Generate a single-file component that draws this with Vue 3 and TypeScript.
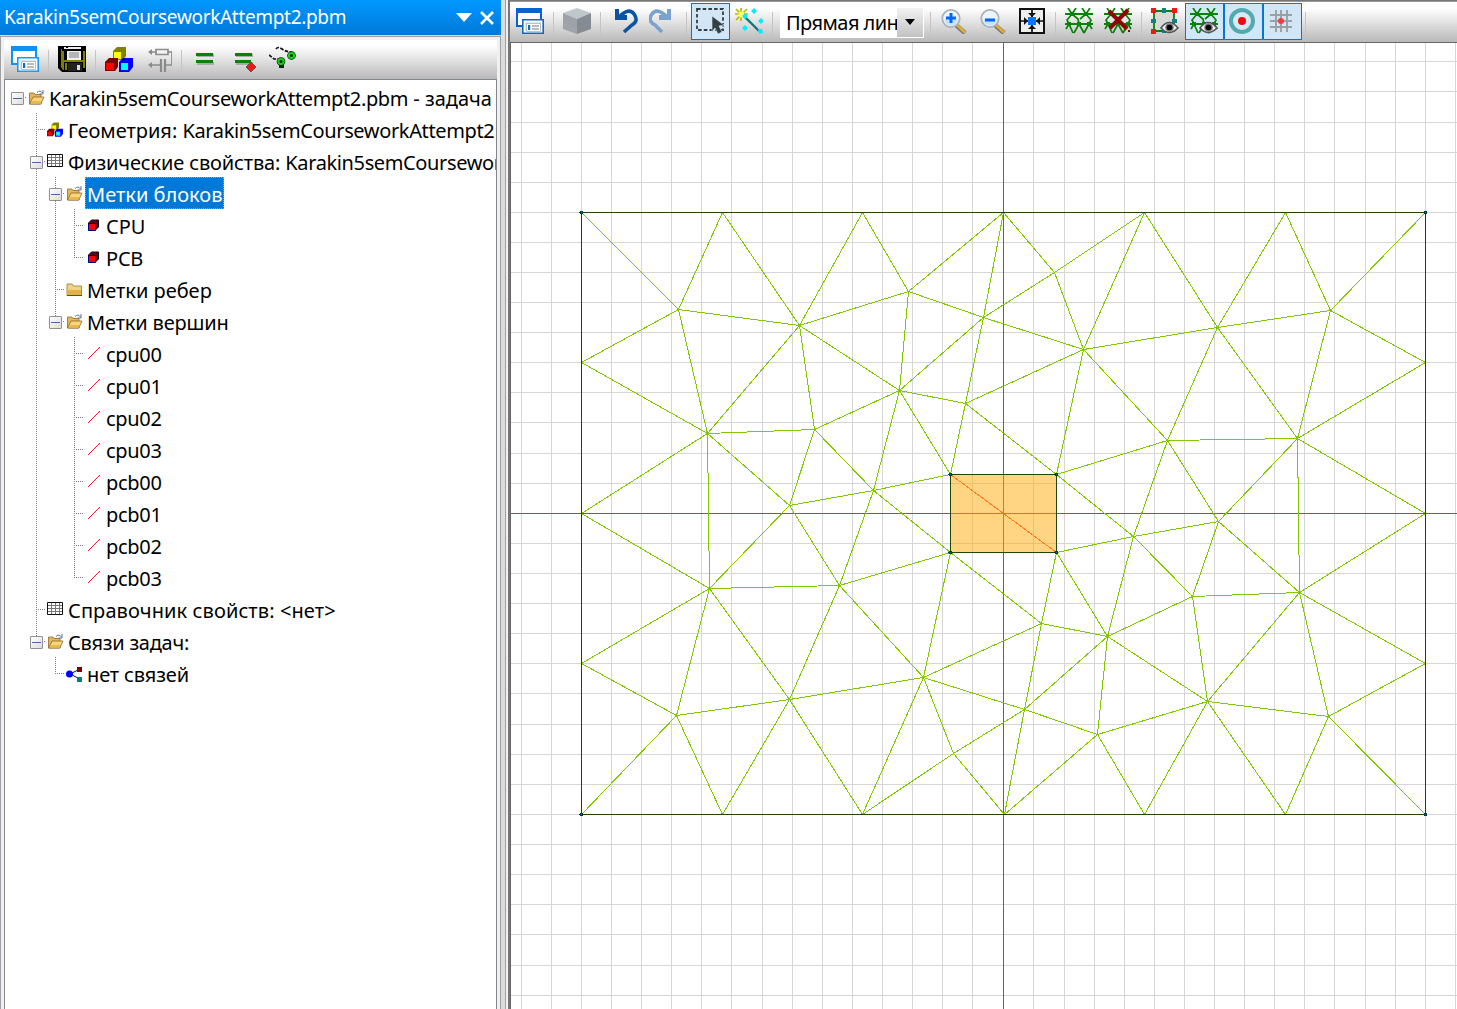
<script setup lang="ts">
type Pt = [number, number]
interface Row { cells: string; icon: string; text: string; selected?: boolean; spacing: number }

// guide cells: E/X/Y expanders (root / middle / last), T tee, L elbow, | line, . blank
const rows: Row[] = [
  { cells: 'E', icon: 'open', text: 'Karakin5semCourseworkAttempt2.pbm - задача', spacing: 0 },
  { cells: '.T', icon: 'cubes', text: 'Геометрия: Karakin5semCourseworkAttempt2', spacing: 0 },
  { cells: '.X', icon: 'table', text: 'Физические свойства: Karakin5semCoursework', spacing: -0.15 },
  { cells: '.|X', icon: 'open', text: 'Метки блоков', selected: true, spacing: 0 },
  { cells: '.||T', icon: 'block', text: 'CPU', spacing: 0 },
  { cells: '.||L', icon: 'block', text: 'PCB', spacing: -0.2 },
  { cells: '.|T', icon: 'closed', text: 'Метки ребер', spacing: 0 },
  { cells: '.|Y', icon: 'open', text: 'Метки вершин', spacing: -0.15 },
  ...['cpu00', 'cpu01', 'cpu02', 'cpu03', 'pcb00', 'pcb01', 'pcb02', 'pcb03'].map((text, i) => ({
    cells: i === 7 ? '.|.L' : '.|.T', icon: 'line', text, spacing: -0.3,
  })),
  { cells: '.T', icon: 'table', text: 'Справочник свойств: <нет>', spacing: 0.1 },
  { cells: '.Y', icon: 'open', text: 'Связи задач:', spacing: -0.27 },
  { cells: '..L', icon: 'link', text: 'нет связей', spacing: -0.15 },
]
const kinds: Record<string, string> = { E: 'root', X: 'mid', Y: 'last', T: 'tee', L: 'elbow', '|': 'pipe', '.': 'blank' }
const parts = (text: string) => text.split(/(Karakin\S+)/).filter(Boolean)

const gridX = [521, 551, 581, 611, 641, 671, 701, 731, 762, 792, 822, 852, 882, 912, 942, 972, 1003, 1033, 1064, 1094, 1124, 1154, 1184, 1214, 1244, 1274, 1304, 1334, 1365, 1395, 1425, 1455]
const gridY = [61, 91, 122, 152, 182, 212, 242, 272, 302, 332, 362, 392, 422, 453, 483, 513, 543, 573, 603, 633, 663, 693, 724, 754, 784, 814, 844, 874, 904, 934, 965, 995]

const nodes: Record<string, Pt> = {
  TL: [581, 212], TR: [1425, 212], BL: [581, 814], BR: [1425, 814],
  T1: [722, 212], T2: [862, 212], T3: [1003, 212], T4: [1144, 212], T5: [1285, 212],
  B1: [722, 814], B2: [862, 814], B3: [1004, 814], B4: [1144, 814], B5: [1285, 814],
  L1: [581, 362], L2: [581, 513], L3: [581, 663], R1: [1425, 362], R2: [1425, 513], R3: [1425, 663],
  K1: [950, 474], K2: [1056, 474], K3: [950, 552], K4: [1056, 552],
  A: [678, 309], B: [799, 325], C: [908, 291], D: [983, 317], E: [899, 390], F: [965, 403],
  G: [707, 433], H: [814, 429], I: [873, 490], J: [789, 505], L: [1054, 272], M: [1083, 349],
  N: [1217, 327], O: [1330, 310], P: [1167, 440], Q: [1297, 438], G2: [709, 588], R: [839, 585],
  S: [789, 699], T: [676, 715], U: [923, 677], V: [953, 753], W: [1133, 536], X: [1218, 521],
  Y: [1192, 596], Z: [1299, 592], a: [1107, 636], b: [1041, 623], c: [1024, 709], d: [1097, 734],
  e: [1207, 701], f: [1328, 716],
}
const edges = (
  'TL-A A-T1 T1-B B-T2 T2-C C-T3 T3-D T3-L L-T4 T4-M T4-N N-T5 T5-O O-TR L-D L-M A-B B-C C-D D-M M-N N-O ' +
  'A-L1 L1-G A-G B-G B-H B-E G-H H-E C-E E-D D-F E-F F-M F-K1 E-K1 M-K2 F-K2 M-P N-P N-Q O-Q O-R1 R1-Q P-Q P-K2 ' +
  'G-L2 G-G2 G-J H-J H-I J-I I-K1 E-I I-K3 I-R L2-G2 J-G2 J-R G2-R R-K3 G2-L3 G2-T G2-S L3-T T-BL T-B1 T-S S-B1 ' +
  'S-R S-U S-B2 R-U U-K3 K3-b U-b U-c U-V U-B2 V-B2 V-c V-B3 c-B3 c-b c-a c-d b-K4 b-a a-K4 a-d a-e a-Y a-W ' +
  'Y-W Y-X W-X W-K4 K2-W P-W P-X X-Q X-Z Y-Z Q-Z Q-R2 R2-Z Z-R3 Z-e Z-f Y-e e-f f-R3 f-BR e-d d-B3 d-B4 e-B4 e-B5 f-B5'
).split(' ').map(s => s.split('-'))
const h = (v: number) => v + 0.5
const meshPath = edges.map(([p, q]) => `M${h(nodes[p][0])} ${h(nodes[p][1])}L${h(nodes[q][0])} ${h(nodes[q][1])}`).join('')
const gridPath = gridX.map(x => `M${h(x)} 43V1009`).join('') + gridY.map(y => `M511 ${h(y)}H1457`).join('')
const corners = ['TL', 'TR', 'BL', 'BR', 'K1', 'K2', 'K3', 'K4'].map(k => nodes[k])

const leftTools = ['windows', '|', 'save', '|', 'cubes', 'circuit', '|', 'equal', 'equalRed', 'solve']
const rightTools = ['windows2', '|', 'box', '|', 'undo', 'redo', '|', 'select*', 'wand', '|', 'combo', '|', 'zoomIn', 'zoomOut', 'fit', '|', 'mesh', 'meshDel', '|', 'shapeEye', 'meshEye*', 'target*', 'hash*', '|']

const win = (a: string, b: string) =>
  `<path fill="#fff" stroke="${a}" stroke-width="2" d="M1 1h24v17H1z"/><path fill="${a}" d="M0 0h26v5H0z"/>` +
  `<path fill="#fff" stroke="${b}" stroke-width="1.6" d="M6.8 11.8h20.4v13.4H6.8z"/><path fill="#dce9f3" d="M9 14h16v9H9z"/>` +
  `<path fill="#fff" stroke="#9ab" stroke-width=".7" d="M10.5 15.500h14v8h-14z"/><path fill="#126ab0" d="M12 17h2.200v5H12z"/><path stroke="#777" stroke-width="1" d="M16 18h7M16 21h7"/>`
const meshBase =
  '<g stroke="#078307" fill="none" stroke-width="2"><path d="M0 6h28M0 16h28"/><path stroke-width="1.700" d="M3 0l4 6 4-6M17 0l4 6 4-6M7 6L2 12l2 4M7 6l6 5 1 5M21 6l-6 5M21 6l5 6-2 4M4 16l4 9M4 16l-3 5M14 16l-5 9M14 16l5 9M24 16l-5 9M24 16l3 5"/></g>' +
  '<g fill="#078307"><path d="M5 4h4v4H5zM19 4h4v4h-4zM2 14h4v4H2zM22 14h4v4h-4zM12 14h4v4h-4z"/></g>'
const eye =
  '<path fill="#f4f4f4" stroke="#555" stroke-width="1.600" d="M10 20q8-11 17 0q-9 9-17 0z"/><circle cx="18.500" cy="19.500" r="4.300" fill="#777"/><circle cx="18.500" cy="19.500" r="2.800" fill="#000"/>'
const cubes =
  '<path fill="#808000" d="M8 5l4-4h9v9l-3 4H8z"/><path fill="#ff0" d="M9 6h7v7H9z"/>' +
  '<path fill="#800000" d="M0 16l4-4h9v9l-3 4H0z"/><path fill="#f00" d="M1 17h8v7H1z"/>' +
  '<path fill="#00f" d="M14 16l4-4h10v9l-4 5H14z"/><path fill="#0ff" d="M16 17h7v7h-7z"/>'
const lens = (sign: string) =>
  `<path d="M16 17l9 8" stroke="#777" stroke-width="4.600"/><path d="M17 17l8 7.500" stroke="#e0ae35" stroke-width="3"/>` +
  `<circle cx="11" cy="10.500" r="8.700" fill="#eaf5fe" stroke="#aab1b8" stroke-width="1.800"/><path fill="#c7e1f8" d="M4.500 11.500q6-3 13 0q-1 6-6.500 6t-6.500-6z"/><path d="${sign}" stroke="#0568f4" stroke-width="3"/>`

const icons: Record<string, string> = {
  windows: win('#0a94fa', '#1a9cf5'),
  windows2: win('#0962ce', '#1768b8'),
  save: '<path fill="#000" d="M0 0h28v26H4l-4-4z"/><path fill="#808000" d="M2 3h1v18l2 3h1V5H4V3zM6 14h20v2H6zM25 5h2v17h-2zM7 17h2v7H7z"/><path fill="#eee" d="M9 5h14v9H9zM6 1h18v2H6z"/><path fill="#000" d="M8 0h2v2H8zM23 0h2v5h-2z"/><path fill="#b5b5b5" d="M11 6h10v6H11z"/><path fill="#222" d="M10 17h14v8H10z"/><path fill="#ddd" d="M19 19h3v5h-3z"/>',
  cubes,
  circuit: '<g transform="translate(4)"><g fill="none" stroke="#8b8b8b" stroke-width="1.700"><path d="M3 6h5M20 6h4v13h-6M13 19H3"/><path d="M8 3.500h12v5H8z"/><path stroke-width="2.200" d="M13 13v13M17 13v13"/></g><path fill="#8b8b8b" d="M0 6l4-3v6zM0 19l4-3v6z"/></g>',
  equal: '<path fill="#aaa" d="M6 8h17v3H6zM6 16h17v3H6z"/><path fill="#078307" d="M5 7h17v3H5zM5 14h17v3H5z"/>',
  equalRed: '<path fill="#aaa" d="M6 8h17v3H6zM6 16h17v3H6z"/><path fill="#078307" d="M5 7h17v3H5zM5 14h16v3H5z"/><path fill="#f01818" stroke="#555" d="M21 16l5 5-5 5-5-5z"/>',
  solve: '<g fill="none" stroke="#111" stroke-width="1.700" stroke-dasharray="3.500 1.500"><path d="M0 9l5 4 7 0"/><path d="M7 3q2-3 6 0t10 3"/></g><g fill="#092a09"><circle cx="12" cy="15.500" r="4.300"/><circle cx="22.500" cy="9.500" r="4.300"/><path d="M10 18h5v4h-5z"/></g><g fill="none" stroke="#13d413" stroke-width="2"><circle cx="12" cy="15.500" r="2.600"/><circle cx="22.500" cy="9.500" r="2.600"/></g>',
  box: '<path fill="#bfc7cb" d="M0 5L14 0l14 5-14 6z"/><path fill="#9da3a9" d="M0 5l14 6v15L0 21z"/><path fill="#848b93" d="M28 5L14 11v15l14-5z"/>',
  undo: '<g transform="translate(5)"><path fill="none" stroke="#0b53a3" stroke-width="3.600" d="M4 9Q14-1 19 6T17 17L9 24"/><path fill="#0b53a3" d="M0 1h4v6h8v5H0z"/></g>',
  redo: '<g transform="translate(-1)"><path fill="none" stroke="#79a3ce" stroke-width="3.600" d="M19 9Q9-1 4 6t3 11l7 7"/><path fill="#79a3ce" d="M23 1h-4v6h-8v5h12z"/></g>',
  select: '<path fill="none" stroke="#333e45" stroke-width="1.800" stroke-dasharray="3.500 2.200" d="M1 1h26v21H1z"/><path fill="#333e45" stroke="#d3e6f5" stroke-width=".6" d="M16 8l12 9-5 1 3 6-4 2-3-6-3 4z"/>',
  wand: '<g stroke="#bcb800" stroke-width="1.700"><path d="M0 6h13M6 0v13M1 1l11 11M12 1L1 12"/></g><circle cx="6.500" cy="6.500" r="3" fill="#ff5"/><path d="M11 10l13 13" stroke="#087b7b" stroke-width="2.400"/><path fill="#0ef" d="M19 0l3 3-3 3-3-3zM26 10l3 3-3 3-3-3zM10 17l3 3-3 3-3-3zM10 5l3 3-3 3-3-3zM23 21l4 0 1 4-4 1z"/>',
  zoomIn: lens('M6 10h10M11 5v10'),
  zoomOut: lens('M6 12h10'),
  fit: '<path fill="#eee" stroke="#111" stroke-width="2" d="M2 1h24v24H2z"/><path stroke="#111" stroke-width="1.700" d="M14 1v24M2 13h24"/><path fill="#111" d="M10 5h8l-4 4zM10 21h8l-4-4zM6 9v8l4-4zM22 9v8l-4-4z"/><path fill="#0576ff" d="M10 9h8v8h-8z"/>',
  mesh: meshBase,
  meshDel: meshBase + '<path d="M5 3l18 18M24 2L6 20" stroke="#8d0707" stroke-width="4"/><path fill="#8d0707" d="M24 22h2v2h-2z"/>',
  shapeEye: '<path fill="#d8d8d8" stroke="#078307" stroke-width="1.800" d="M3 3h20v20H3z"/><path fill="#f11717" d="M0 0h5v5H0zM21 0h5v5h-5zM0 21h5v5H0z"/><path fill="#167d84" d="M11 0h4v5h-4zM0 11h5v4H0zM21 11h5v4h-5zM11 21h4v4h-4z"/>' + eye,
  meshEye: meshBase + eye,
  target: '<circle cx="13" cy="13" r="11" fill="#d7e9f4" stroke="#50aaae" stroke-width="4"/><circle cx="13" cy="13" r="4" fill="#f00a0a"/>',
  hash: '<path d="M8 2v22M13 2v22M19 2v22M2 7h22M2 13h22M2 19h22" stroke="#9aa0a5" stroke-width="1.900"/><circle cx="13" cy="13" r="3" fill="#f13c3c"/>',
}
const treeIcons: Record<string, string> = {
  open: '<path fill="#e3b65a" stroke="#8f6a2a" stroke-width=".8" d="M1.500 3h4.500l1 1.500h6V14h-11.500z"/><path fill="#f7d67c" stroke="#8f6a2a" stroke-width=".8" d="M5 7H16L12.800 14H1.700z"/><path fill="#e9b94c" d="M3.500 11h10l-1 2.500H2.500z"/><path fill="none" stroke="#58759b" d="M9 2.500q3-3 5.500.5M15 0v4h-3.500"/>',
  closed: '<path fill="#f0d484" stroke="#8f7439" stroke-width=".8" d="M1 2h5l1.500 2H15.500v9.500H1z"/><path fill="#e3b348" d="M1.500 8h13.500v5H1.500z"/><path stroke="#634c1e" d="M1 13.500h15"/>',
  cubes: `<g transform="scale(.57)">${cubes}</g>`,
  table: '<path fill="#fff" stroke="#111" d="M.5.5h15v12H.5z"/><path stroke="#777" d="M1 3.500h14M1 6.500h14M1 9.500h14M4.500 1v11M8.500 1v11M12.500 1v11"/>',
  block: '<path fill="#6b0000" stroke="#000030" d="M3.500 5l3-3h7v7l-3 3h-7z"/><path fill="#f00" stroke="#00007d" d="M3.500 5.500h7v7h-7z"/>',
  line: '<path stroke="#d60000" stroke-width=".9" shape-rendering="crispEdges" d="M3 13L15 1"/>',
  link: '<path stroke="#111" d="M4 8l10-5M4 8l10 5"/><circle cx="3.500" cy="8" r="3.500" fill="#00f"/><path fill="#800000" d="M11 1h5v5h-5z"/><path fill="#008080" d="M11 11h5v5h-5z"/>',
}
</script>

<template>
  <div class="app">
    <aside class="panel">
      <header class="title">
        <span class="name">Karakin5semCourseworkAttempt2.pbm</span>
        <svg class="caret" width="16" height="9"><path d="M0 0h16L8 9z" fill="#fff" /></svg>
        <svg class="close" width="14" height="14"><path d="M1 1l12 12M13 1L1 13" stroke="#fff" stroke-width="2.600" /></svg>
      </header>
      <div class="body">
        <div class="toolbar left">
          <template v-for="(t, i) in leftTools" :key="i">
            <i v-if="t === '|'" class="sep" />
            <button v-else class="tool"><svg width="28" height="26" v-html="icons[t]" /></button>
          </template>
        </div>
        <div class="tree">
          <div v-for="(r, i) in rows" :key="i" class="row">
            <span v-for="(c, j) in r.cells.split('')" :key="j" class="cell" :class="kinds[c]">
              <i v-if="'EXY'.includes(c)" class="box" />
            </span>
            <span class="icon"><svg width="17" height="16" v-html="treeIcons[r.icon]" /></span>
            <span class="label" :class="{ selected: r.selected }" :style="{ letterSpacing: r.spacing + 'px' }"><span v-for="(p, j) in parts(r.text)" :key="j" :class="{ file: p.startsWith('Karakin') }">{{ p }}</span></span>
          </div>
        </div>
      </div>
    </aside>
    <div class="splitter" />
    <main class="work">
      <div class="toolbar right">
        <template v-for="(t, i) in rightTools" :key="i">
          <i v-if="t === '|'" class="sep" />
          <div v-else-if="t === 'combo'" class="combo">
            <span>Прямая лин</span>
            <b><svg width="10" height="6"><path d="M0 0h10L5 6z" /></svg></b>
          </div>
          <button v-else class="tool" :class="{ on: t.endsWith('*') }">
            <svg width="28" height="26" v-html="icons[t.replace('*', '')]" />
          </button>
        </template>
      </div>
      <svg class="canvas" width="946" height="966" viewBox="511 43 946 966" shape-rendering="crispEdges" fill="none">
        <path :d="gridPath" stroke="#d6d6d6" />
        <path d="M511 513.500H1457M1003.500 43V1009" stroke="#8f5f0a" />
        <path :d="meshPath" stroke="#80c800" />
        <path d="M950 474h107v79H950z" fill="#ffaa05" fill-opacity=".5" />
        <path d="M950.500 474.500L1056.500 552.500" stroke="#ff7a1a" />
        <path d="M581.500 212.500h844v602h-844zM950.500 474.500h106v78h-106z" stroke="#204600" />
        <g v-for="(p, i) in corners" :key="i" fill="#003c46">
          <rect :x="p[0] - 1" :y="p[1] - 1" width="3" height="3" />
          <rect :x="p[0] - 2" :y="p[1]" width="1" height="1" />
          <rect :x="p[0]" :y="p[1]" width="1" height="1" fill="#008080" />
        </g>
      </svg>
    </main>
  </div>
</template>

<style>
body { margin: 0; overflow: hidden; }
</style>

<style scoped>
.app {
  display: flex;
  width: 1457px;
  height: 1009px;
  overflow: hidden;
  background: #dcdcdc;
  color: #000;
  font: 20px/32px "Noto Sans", "Open Sans", sans-serif;
}
.panel { display: flex; flex-direction: column; width: 501px; flex: none; }
.title {
  display: flex;
  align-items: center;
  box-sizing: border-box;
  height: 35px;
  padding: 0 7px 0 4px;
  background: linear-gradient(#0098ff, #0078d7);
  color: #fff;
  font-size: 19px;
  line-height: 35px;
  letter-spacing: -0.32px;
}
.name { flex: 1; white-space: nowrap; }
.close { margin-left: 8px; }
.body {
  flex: 1;
  display: flex;
  flex-direction: column;
  min-height: 0;
  margin-top: 1px;
  padding: 3px 3px 0;
  border: 1px solid #a0a0a0;
  border-bottom: 0;
  background: #f0f0f0;
}
.toolbar { display: flex; align-items: center; flex: none; background: linear-gradient(#fff 15%, #b9b9b9); }
.left { height: 39px; padding-left: 2px; }
.tool {
  display: flex;
  align-items: center;
  box-sizing: border-box;
  width: 39px;
  height: 37px;
  padding: 0 0 0 5px;
  border: 0;
  background: none;
  flex: none;
}
.tool svg { margin-top: -1px; }
.tool.on { border: 1px solid #0078d7; background: #d3e6f5; padding-left: 4px; }
.sep { width: 1px; height: 25px; margin: 6px 4px 0 3px; background: #c4c4c4; flex: none; }
.tree {
  flex: 1;
  overflow: hidden;
  padding: 1px 0 0 3px;
  border: 1px solid #828790;
  border-bottom: 0;
  background: #fff;
}
.row { display: flex; height: 32px; white-space: nowrap; }
.cell {
  --h: repeating-linear-gradient(90deg, #808080 0 1px, transparent 1px 2px);
  --v: repeating-linear-gradient(#808080 0 1px, transparent 1px 2px);
  display: flex;
  justify-content: center;
  width: 19px;
  flex: none;
  background-repeat: no-repeat;
}
.pipe { background-image: var(--v); background-position: 9px 0; background-size: 1px 32px; }
.tee, .mid { background-image: var(--v), var(--h); background-position: 9px 0, 9px 16px; background-size: 1px 32px, 10px 1px; }
.elbow, .last { background-image: var(--v), var(--h); background-position: 9px 0, 9px 16px; background-size: 1px 17px, 10px 1px; }
.root { background-image: var(--h); background-position: 9px 16px; background-size: 10px 1px; }
.box {
  box-sizing: border-box;
  width: 13px;
  height: 13px;
  margin-top: 11px;
  border: 1px solid #919191;
  border-radius: 1px;
  background: linear-gradient(#4b63a7, #4b63a7) center / 9px 1px no-repeat, linear-gradient(135deg, #fff, #dcdcdc);
}
.icon { width: 19px; padding: 9px 0 0 1px; box-sizing: border-box; flex: none; line-height: 0; }
.label { margin-left: 1px; padding: 0 2px; height: 32px; line-height: 36px; }
.file { letter-spacing: -0.37px; }
.selected { background: #0078d7; color: #fff; outline: 1px dotted #ff8728; outline-offset: -1px; }
.splitter {
  box-sizing: border-box;
  width: 7px;
  flex: none;
  border-right: 2px solid #f0f0f0;
  background: linear-gradient(90deg, #dcdcdc 4px, #a0a0a0 4px);
}
.work { flex: 1; min-width: 0; border-left: 2px solid #777; border-top: 1px solid #777; }
.right { height: 41px; padding: 0 0 1px 1px; border-top: 1px solid #999; box-sizing: border-box; }
.combo {
  display: flex;
  align-items: stretch;
  box-sizing: border-box;
  width: 144px;
  height: 30px;
  margin: 2px 3px 0;
  padding: 0 1px 1px 0;
  background: #fff;
  white-space: nowrap;
}
.combo span { width: 117px; padding-left: 6px; box-sizing: border-box; line-height: 30px; letter-spacing: -0.55px; }
.combo b { flex: 1; display: flex; align-items: center; justify-content: center; background: linear-gradient(#f2f2f2, #c2c2c2); }
.canvas { display: block; box-sizing: border-box; border-top: 1px solid #666; border-left: 1px solid #666; background: #fff; width: 947px; height: 967px; }
</style>
